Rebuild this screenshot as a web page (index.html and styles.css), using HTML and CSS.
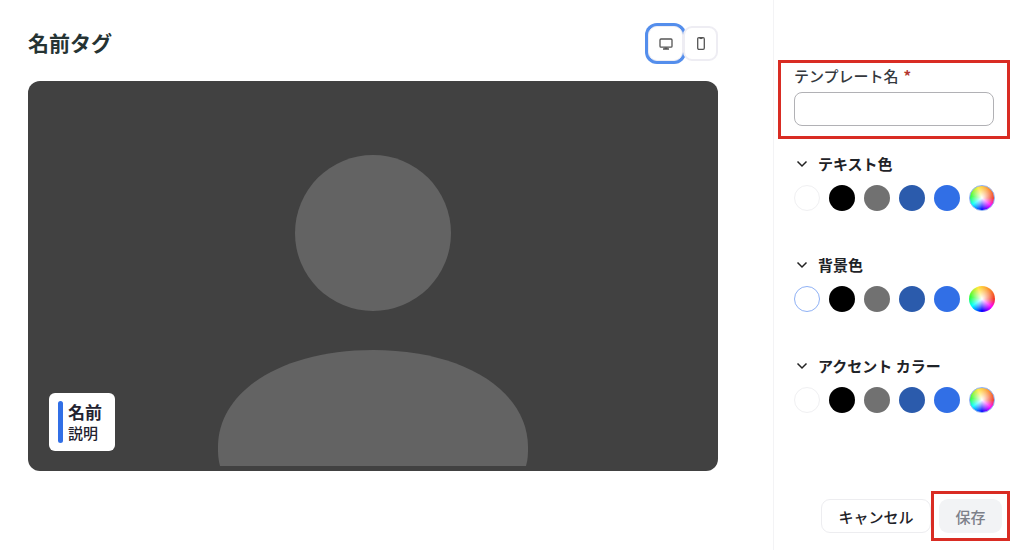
FILE: index.html
```html
<!DOCTYPE html>
<html lang="ja">
<head>
    <meta charset="UTF-8">
    <meta name="viewport" content="width=device-width, initial-scale=1.0">
    <title>名前タグ</title>
    <link rel="stylesheet" href="styles.css">
</head>
<body>
    <main class="editor">
        <header class="editor-header">
            <h1>名前タグ</h1>
            <div class="device-toggle">
                <button type="button" class="device active" aria-label="デスクトップ">
                    <svg width="14" height="12" viewBox="0 0 14 12" fill="none" stroke="#555" stroke-width="1.3">
                        <rect x="1" y="1" width="12" height="8.200" rx="1" />
                        <path d="M4 11h6M5.500 10.200h3" />
                    </svg>
                </button>
                <button type="button" class="device" aria-label="モバイル">
                    <svg width="8" height="13" viewBox="0 0 8 13" fill="none" stroke="#555" stroke-width="1.3">
                        <rect x="0.7" y="0.7" width="6.6" height="11.6" rx="1.2" />
                        <path d="M2.5 1.4h3" />
                    </svg>
                </button>
            </div>
        </header>

        <div class="preview">
            <svg class="avatar" viewBox="0 0 690 390" fill="#636363">
                <circle cx="345" cy="152" r="78" />
                <path d="M192 385C190 378 190 372 190 366C190 310 254 269 345 269S500 310 500 366C500 372 500 378 498 385Z" />
            </svg>
            <div class="name-tag">
                <span class="accent"></span>
                <div>
                    <div class="tag-name">名前</div>
                    <div class="tag-text">説明</div>
                </div>
            </div>
        </div>
    </main>

    <aside class="sidebar">
        <div class="field highlight">
            <label for="template-name">テンプレート名<span class="required">*</span></label>
            <input type="text" id="template-name" required>
        </div>

        <section class="color-group">
            <button type="button" class="group-title">
                <svg width="12" height="8" viewBox="0 0 12 8" fill="none" stroke="#222" stroke-width="1.5"><path d="M1.5 1.5L6 6l4.500-4.500" /></svg>
                テキスト色
            </button>
            <div class="swatches">
                <button type="button" class="swatch white" aria-label="白"></button>
                <button type="button" class="swatch black" aria-label="黒"></button>
                <button type="button" class="swatch gray" aria-label="グレー"></button>
                <button type="button" class="swatch navy" aria-label="紺"></button>
                <button type="button" class="swatch blue" aria-label="青"></button>
                <button type="button" class="swatch custom selected" aria-label="カスタム"></button>
            </div>
        </section>

        <section class="color-group">
            <button type="button" class="group-title">
                <svg width="12" height="8" viewBox="0 0 12 8" fill="none" stroke="#222" stroke-width="1.5"><path d="M1.5 1.5L6 6l4.500-4.500" /></svg>
                背景色
            </button>
            <div class="swatches">
                <button type="button" class="swatch white selected" aria-label="白"></button>
                <button type="button" class="swatch black" aria-label="黒"></button>
                <button type="button" class="swatch gray" aria-label="グレー"></button>
                <button type="button" class="swatch navy" aria-label="紺"></button>
                <button type="button" class="swatch blue" aria-label="青"></button>
                <button type="button" class="swatch custom" aria-label="カスタム"></button>
            </div>
        </section>

        <section class="color-group">
            <button type="button" class="group-title">
                <svg width="12" height="8" viewBox="0 0 12 8" fill="none" stroke="#222" stroke-width="1.5"><path d="M1.5 1.5L6 6l4.500-4.500" /></svg>
                アクセント カラー
            </button>
            <div class="swatches">
                <button type="button" class="swatch white" aria-label="白"></button>
                <button type="button" class="swatch black" aria-label="黒"></button>
                <button type="button" class="swatch gray" aria-label="グレー"></button>
                <button type="button" class="swatch navy" aria-label="紺"></button>
                <button type="button" class="swatch blue" aria-label="青"></button>
                <button type="button" class="swatch custom selected" aria-label="カスタム"></button>
            </div>
        </section>

        <div class="actions">
            <button type="button" class="btn cancel">キャンセル</button>
            <div class="save-box highlight">
                <button type="submit" class="btn save" disabled>保存</button>
            </div>
        </div>
    </aside>
</body>
</html>
```
FILE: styles.css
```css
* {
    box-sizing: border-box;
}

body {
    margin: 0;
    min-height: 100vh;
    display: flex;
    background-color: #fff;
    color: #1f2328;
    font-family: "Noto Sans CJK JP", sans-serif;
}

button {
    font-family: inherit;
    padding: 0;
    cursor: pointer;
}

/* Left side */
.editor {
    flex: 1;
    padding: 26px 55px 26px 28px;
}

.editor-header {
    display: flex;
    justify-content: space-between;
    align-items: flex-start;
    margin-bottom: 20px;
}

h1 {
    margin: 0;
    font-size: 21px;
    line-height: 32px;
    color: #253333;
}

.device-toggle {
    display: flex;
}

.device {
    display: flex;
    align-items: center;
    justify-content: center;
    width: 35px;
    height: 35px;
    background-color: #fff;
    border: 2px solid #eeedf3;
    border-radius: 9px;
}

.device.active {
    border-width: 1px;
    box-shadow: 0 0 0 3px #548eec;
}

.preview {
    position: relative;
    background-color: #414141;
    border-radius: 12px;
    overflow: hidden;
}

.avatar {
    display: block;
    width: 100%;
}

.name-tag {
    position: absolute;
    left: 21px;
    bottom: 20px;
    display: flex;
    gap: 5px;
    padding: 8px 13px 8px 9px;
    background-color: #fff;
    border-radius: 6px;
}

.accent {
    width: 5px;
    border-radius: 3px;
    background-color: #316fe6;
}

.tag-name {
    font-size: 17px;
    font-weight: bold;
    line-height: 22px;
    color: #222230;
}

.tag-text {
    font-size: 15px;
    font-weight: 500;
    line-height: 20px;
    color: #222230;
}

/* Right side */
.sidebar {
    flex: 0 0 251px;
    display: flex;
    flex-direction: column;
    padding: 60px 14px 9px 4px;
    border-left: 1px solid #f3f3f5;
}

.highlight {
    border: 3px solid #d92c23;
}

.field {
    padding: 1px 13px 10px;
    margin-bottom: 12px;
}

.field label {
    display: block;
    font-size: 15px;
    font-weight: 500;
    line-height: 24px;
    margin-bottom: 4px;
    color: #34383d;
}

.required {
    margin-left: 5px;
    color: #b3362e;
    font-weight: bold;
}

.field input {
    display: block;
    width: 100%;
    height: 34px;
    padding: 0 10px;
    font-size: 15px;
    border: 1px solid #b1b1b5;
    border-radius: 8px;
}

.color-group {
    padding-left: 16px;
    margin-bottom: 41px;
}

.group-title {
    display: flex;
    align-items: center;
    gap: 10px;
    margin-bottom: 9px;
    padding-left: 2px;
    background: none;
    border: none;
    font-size: 15px;
    font-weight: bold;
    line-height: 25px;
    color: #1f2328;
}

.swatches {
    display: flex;
    gap: 9px;
}

.swatch {
    width: 26px;
    height: 26px;
    border: none;
    border-radius: 50%;
}

.white {
    background-color: #fff;
    border: 1px solid #f0f0f2;
}

.black {
    background-color: #000;
}

.gray {
    background-color: #717171;
}

.navy {
    background-color: #2b5bac;
}

.blue {
    background-color: #316fe6;
}

.custom {
    background: radial-gradient(circle, #fff, rgba(255, 255, 255, 0) 64%),
        conic-gradient(#ffc93a, #f33a24 90deg, #f0f 130deg, #00f 180deg, #0ff 235deg, #3f3 280deg, #ffe83a 340deg, #ffc93a);
}

.swatch.selected {
    border: 1px solid #8fb1f5;
    background-origin: border-box;
}

.actions {
    display: flex;
    justify-content: flex-end;
    align-items: center;
    margin-top: auto;
}

.btn {
    height: 34px;
    font-size: 15px;
    font-weight: 500;
    border-radius: 9px;
}

.cancel {
    width: 110px;
    background-color: #fff;
    border: 1px solid #ededf0;
    color: #1f2328;
}

.save-box {
    padding: 5px;
}

.save {
    display: block;
    width: 63px;
    background-color: #f2f3f5;
    border: none;
    color: #7d808a;
    cursor: default;
}
```
